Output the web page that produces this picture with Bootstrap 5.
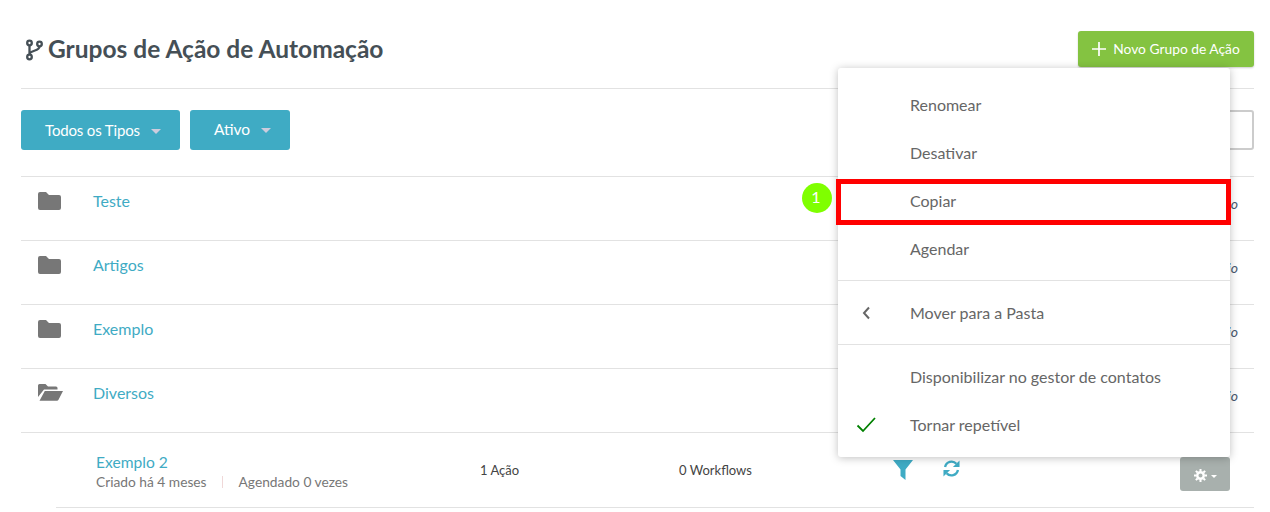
<!DOCTYPE html>
<html lang="pt">
<head>
    <meta charset="UTF-8">
    <meta name="viewport" content="width=device-width, initial-scale=1.0">
    <title>Grupos de Ação de Automação</title>
    <link href="https://cdn.jsdelivr.net/npm/bootstrap@5.3.0/dist/css/bootstrap.min.css" rel="stylesheet">
    <style>
        body { font-family: "Lato", "Liberation Sans", sans-serif; color: #555; background: #fff; overflow: hidden; }
        a { text-decoration: none; }
        .page-wrap { padding: 0 16px 0 21px; height: 512px; }

        /* Cabeçalho */
        .head-bar { height: 89px; border-bottom: 1px solid #e2e2e2; padding-top: 10px; }
        .head-title { font-size: 24.5px; font-weight: 700; color: #454f56; margin: 0; }
        .head-title svg { margin: 0 5px 0 5px; vertical-align: -3px; }
        .btn-novo { background: #84c341; border: 0; color: #fff; font-size: 13.8px; width: 176px; height: 36px; padding: 0; box-shadow: 0 1px 2px rgba(0,0,0,.2); border-radius: 3px; }
        .btn-novo:hover { background: #84c341; color: #fff; }
        .btn-novo svg { margin-right: 7px; vertical-align: -2px; }

        /* Filtros */
        .tool-bar { height: 87px; padding-top: 21px; }
        .filtro-grupo { gap: 10px; }
        .btn-filtro { background: #3fabc4; border: 0; color: #fff; font-size: 15px; letter-spacing: -.15px; height: 40px; padding: 0 19px 0 24px; border-radius: 3px; }
        .btn-filtro:hover { background: #3fabc4; color: #fff; }
        .btn-filtro::after { margin-left: 11px; vertical-align: 2px; border-top: 5px solid #ccd; border-right: 5px solid transparent; border-left: 5px solid transparent; border-bottom: 0; }
        .btn-ativo { font-size: 15.5px; letter-spacing: 0; }
        .busca-box { width: 160px; height: 40px; border: 2px solid #ccc; border-radius: 3px; }

        /* Linhas */
        .pasta-row { height: 64px; border-top: 1px solid #e2e2e2; padding-top: 14px; }
        .pasta-ico { width: 72px; padding-left: 17px; height: 20px; }
        .pasta-ico svg { display: block; margin-top: 1px; }
        .pasta-nome { font-size: 16px; color: #3fabc4; line-height: 20px; }
        .pasta-fim { font-size: 14px; font-style: italic; color: #4a5a70; padding: 2px 16px 0 0; }
        .grupo-row { height: 75px; margin-left: 35px; border-bottom: 1px solid #e2e2e2; }
        .grupo-sep { height: 1px; background: #e2e2e2; }
        .grupo-info { width: 424px; padding: 19px 0 0 40px; }
        .grupo-nome { font-size: 15.6px; line-height: 20px; color: #3fabc4; display: block; }
        .grupo-sub { font-size: 13.75px; line-height: 20px; color: #777; white-space: nowrap; }
        .grupo-barra { display: inline-block; width: 1px; height: 12px; background: #f0d8d8; margin: 0 16px 0 15px; vertical-align: -1px; }
        .grupo-acoes { width: 199px; font-size: 13px; color: #444; padding-top: 28px; }
        .grupo-wf { width: 214px; font-size: 13px; color: #444; padding-top: 28px; }
        .grupo-icos { padding-top: 27px; gap: 30px; width: 287px; }
        .btn-engrenagem { background: #a8b0ad; border: 0; width: 50px; height: 34px; border-radius: 3px; margin-top: 24px; padding: 0; color: #fff; }
        .btn-engrenagem:hover { background: #a8b0ad; color: #fff; }
        .btn-engrenagem::after { margin-left: 4px; vertical-align: 2px; border-top: 3px solid #fff; border-right: 3px solid transparent; border-left: 3px solid transparent; border-bottom: 0; }

        /* Menu de ações */
        .menu-acoes { display: block; position: absolute; left: 838px; top: 68px; width: 392px; padding: 13px 0 8px; border: 0; border-radius: 3px; box-shadow: 0 1px 8px rgba(0,0,0,.25); z-index: 10; }
        .menu-acoes .dropdown-item { height: 48px; line-height: 48px; padding: 0 0 0 72px; font-size: 16px; color: #666; position: relative; }
        .menu-acoes .dropdown-divider { margin: 7px 0 8px; border-color: #e2e2e2; opacity: 1; }
        .menu-ico { position: absolute; left: 18px; top: 15px; }
        .marca-copiar { position: absolute; left: -2px; top: 2px; right: -1px; bottom: 0; border: 5px solid #f00; pointer-events: none; }
        .bola-passo { position: absolute; left: -36px; top: 6px; width: 30px; height: 30px; border-radius: 50%; background: #7fff00; color: #fff; font-size: 16px; line-height: 27px; text-align: center; padding-right: 2px; }
    </style>
</head>
<body>
    <div class="page-wrap position-relative">
        <!-- Cabeçalho -->
        <div class="head-bar d-flex justify-content-between align-items-center">
            <h1 class="head-title">
                <svg width="17" height="22" viewBox="0 0 17 22" fill="none" stroke="#454f56" stroke-width="2.300"><circle cx="3.500" cy="4" r="2.300"/><circle cx="3.500" cy="18" r="2.300"/><circle cx="13.500" cy="5" r="2.300"/><path d="M3.500 6.500v9M13.500 7.500c0 5-10 3.500-10 8"/></svg>Grupos de Ação de Automação
            </h1>
            <button class="btn btn-novo" type="button"><svg width="14" height="14" viewBox="0 0 14 14" stroke="#fff" stroke-width="1.700"><path d="M7 0v14M0 7h14"/></svg>Novo Grupo de Ação</button>
        </div>

        <!-- Filtros -->
        <div class="tool-bar d-flex justify-content-between">
            <div class="filtro-grupo d-flex">
                <button class="btn btn-filtro dropdown-toggle" type="button">Todos os Tipos</button>
                <button class="btn btn-filtro btn-ativo dropdown-toggle" type="button">Ativo</button>
            </div>
            <div class="busca-box"></div>
        </div>

        <!-- Pastas -->
        <div class="pasta-row d-flex justify-content-between">
            <div class="d-flex">
                <div class="pasta-ico"><svg width="23" height="18" viewBox="0 0 23 18"><path fill="#777" d="M2 0h6l3 3h10a2 2 0 0 1 2 2v11a2 2 0 0 1-2 2H2a2 2 0 0 1-2-2V2a2 2 0 0 1 2-2z"/></svg></div>
                <a href="#" class="pasta-nome">Teste</a>
            </div>
            <span class="pasta-fim">Vazio</span>
        </div>
        <div class="pasta-row d-flex justify-content-between">
            <div class="d-flex">
                <div class="pasta-ico"><svg width="23" height="18" viewBox="0 0 23 18"><path fill="#777" d="M2 0h6l3 3h10a2 2 0 0 1 2 2v11a2 2 0 0 1-2 2H2a2 2 0 0 1-2-2V2a2 2 0 0 1 2-2z"/></svg></div>
                <a href="#" class="pasta-nome">Artigos</a>
            </div>
            <span class="pasta-fim">Vazio</span>
        </div>
        <div class="pasta-row d-flex justify-content-between">
            <div class="d-flex">
                <div class="pasta-ico"><svg width="23" height="18" viewBox="0 0 23 18"><path fill="#777" d="M2 0h6l3 3h10a2 2 0 0 1 2 2v11a2 2 0 0 1-2 2H2a2 2 0 0 1-2-2V2a2 2 0 0 1 2-2z"/></svg></div>
                <a href="#" class="pasta-nome">Exemplo</a>
            </div>
            <span class="pasta-fim">Vazio</span>
        </div>
        <div class="pasta-row d-flex justify-content-between">
            <div class="d-flex">
                <div class="pasta-ico"><svg width="25" height="17" viewBox="0 0 25 17"><path fill="#777" d="M1.500 0h6l2.500 2.500h8a1.500 1.500 0 0 1 1.500 1.500v1.500H6L0 13V1.500A1.500 1.500 0 0 1 1.500 0zM6.800 7H25l-4.500 8.800a2 2 0 0 1-1.500 1H1.500z"/></svg></div>
                <a href="#" class="pasta-nome">Diversos</a>
            </div>
            <span class="pasta-fim">Vazio</span>
        </div>
        <div class="grupo-sep"></div>

        <!-- Grupo -->
        <div class="grupo-row d-flex">
            <div class="grupo-info">
                <a href="#" class="grupo-nome">Exemplo 2</a>
                <div class="grupo-sub">Criado há 4 meses<span class="grupo-barra"></span>Agendado 0 vezes</div>
            </div>
            <div class="grupo-acoes">1 Ação</div>
            <div class="grupo-wf">0 Workflows</div>
            <div class="grupo-icos d-flex">
                <svg width="20" height="20" viewBox="0 0 20 20"><path fill="#3fabc4" d="M0 0h20l-7.500 9.500V20l-5-4V9.500z"/></svg>
                <svg width="17" height="17" viewBox="0 0 18 18" fill="none" stroke="#3fabc4" stroke-width="2.500"><path d="M2.200 7.500A7 7 0 0 1 14.200 4"/><path d="M15.800 10.500A7 7 0 0 1 3.800 14"/><path fill="#3fabc4" stroke="none" d="M17.500 .5v7h-7zM.5 17.500v-7h7z"/></svg>
            </div>
            <button class="btn btn-engrenagem dropdown-toggle" type="button"><svg width="13" height="13" viewBox="0 0 14 14" fill="none" stroke="#fff"><circle cx="7" cy="7" r="3.500" stroke-width="2.600"/><path stroke-width="2.200" d="M7 0v2.500M7 11.500V14M0 7h2.500M11.500 7H14M2 2l1.800 1.800M10.200 10.200L12 12M12 2l-1.800 1.800M3.800 10.200L2 12"/></svg></button>
        </div>

        <!-- Menu de ações -->
        <ul class="dropdown-menu menu-acoes list-unstyled">
            <li><a class="dropdown-item" href="#">Renomear</a></li>
            <li><a class="dropdown-item" href="#">Desativar</a></li>
            <li><a class="dropdown-item" href="#">Copiar<span class="marca-copiar"></span><span class="bola-passo">1</span></a></li>
            <li><a class="dropdown-item" href="#">Agendar</a></li>
            <li><hr class="dropdown-divider"></li>
            <li><a class="dropdown-item" href="#"><svg class="menu-ico" width="20" height="18" viewBox="0 0 20 18" fill="none" stroke="#666" stroke-width="2"><path d="M13 3.500L8 9l5 5.500"/></svg>Mover para a Pasta</a></li>
            <li><hr class="dropdown-divider"></li>
            <li><a class="dropdown-item" href="#">Disponibilizar no gestor de contatos</a></li>
            <li><a class="dropdown-item" href="#"><svg class="menu-ico" width="20" height="18" viewBox="0 0 20 18" fill="none" stroke="#008000" stroke-width="1.800"><path d="M1.500 9.500L7 15 19 2"/></svg>Tornar repetível</a></li>
        </ul>
    </div>

    <script src="https://cdn.jsdelivr.net/npm/bootstrap@5.3.0/dist/js/bootstrap.bundle.min.js"></script>
</body>
</html>
